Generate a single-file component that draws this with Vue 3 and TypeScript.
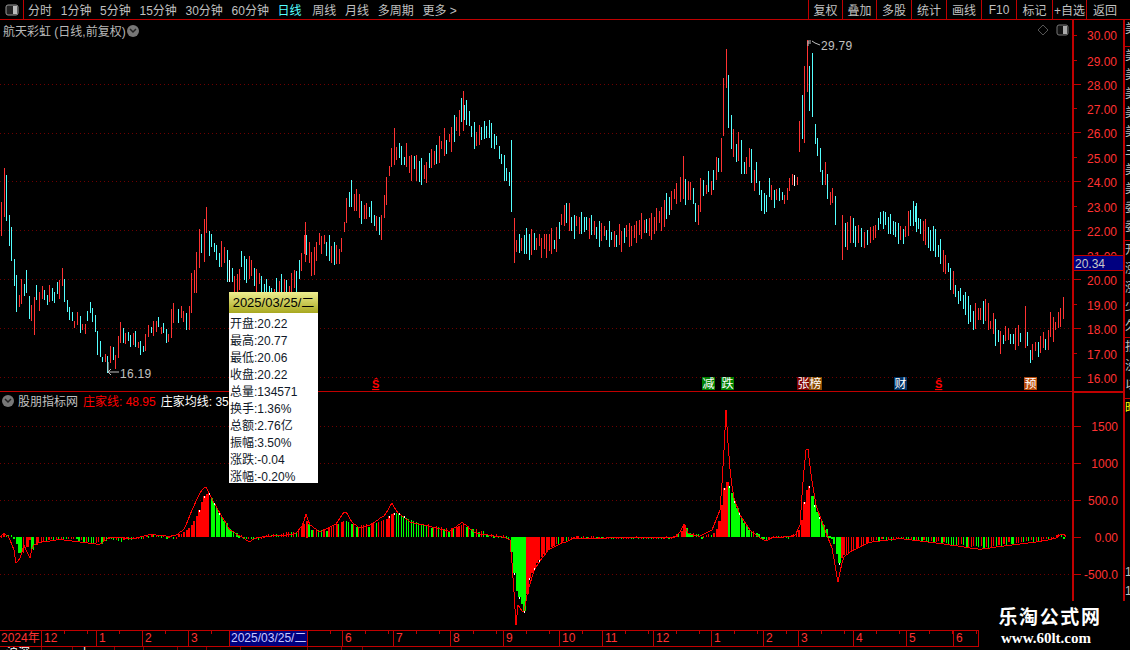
<template>
  <div class="terminal">
    <header class="toolbar">
      <button class="layout-btn" aria-label="layout">
        <svg width="14" height="12" viewBox="0 0 14 12">
          <rect x="1" y="1" width="12" height="10" rx="2" fill="#222" stroke="#999" />
          <rect x="8" y="2" width="4" height="8" fill="#bbb" />
        </svg>
      </button>
      <nav class="periods">
        <span v-for="p in periods" :key="p" class="period" :class="{ active: p === '日线' }">{{ p }}</span>
        <span class="period">更多 &gt;</span>
      </nav>
      <div class="actions">
        <span v-for="a in actions" :key="a" class="action">{{ a }}</span>
      </div>
    </header>

    <div class="workspace">
      <div class="charts">
        <svg class="plot" width="1072" height="610" viewBox="0 20 1072 610">
          <g shape-rendering="crispEdges">
            <line v-for="y in gridLines" :key="y" class="grid" x1="0" x2="1072" :y1="y + 0.5" :y2="y + 0.5" />
            <line x1="0" x2="1072" y1="391.5" y2="391.5" class="divider" />
            <rect
              v-for="(b, i) in candles"
              :key="i"
              :x="b.x"
              :y="b.top"
              width="1"
              :height="b.bottom - b.top"
              :fill="candleColors[b.c]"
            />
            <rect
              v-for="(b, i) in histogram"
              :key="'h' + i"
              :x="b.x"
              :y="b.y"
              :width="b.w"
              :height="b.h"
              :fill="b.color"
            />
            <polyline class="main-line" :points="redPoints" />
            <rect
              v-for="(d, i) in whiteDots"
              :key="'d' + i"
              :x="d.x"
              :y="d.y"
              width="1"
              height="2"
              fill="#ffffff"
            />
          </g>

          <!-- extreme price flags -->
          <path d="M808 46V41H811M808 43H811M812 41L815 43L820 45" class="flag" />
          <text x="821" y="50" class="extreme">29.79</text>
          <path d="M119 372H108M108 372L111 369M108 372L111 375M108 372V362" class="flag" />
          <text x="120" y="378" class="extreme">16.19</text>

          <!-- event marks -->
          <g v-for="m in marks" :key="m.x">
            <rect :x="m.x" y="377" width="13" height="13" :fill="m.bg" shape-rendering="crispEdges" />
            <text :x="m.x + 0.5" y="388" class="mark-text">{{ m.t }}</text>
          </g>
          <text v-for="x in sMarks" :key="x" :x="x" y="388" class="s-mark">Ŝ</text>
        </svg>

        <div class="pane-title main-title">
          航天彩虹 (日线,前复权)
          <span class="round-btn">
            <svg width="8" height="6" viewBox="0 0 8 6"><path d="M1 1L4 4L7 1" fill="none" stroke="#222" stroke-width="1.5" /></svg>
          </span>
        </div>
        <div class="pane-tools">
          <svg width="12" height="12" viewBox="0 0 12 12"><path d="M6 1L11 6L6 11L1 6Z" fill="none" stroke="#555" /></svg>
          <svg width="13" height="12" viewBox="0 0 13 12">
            <rect x="1" y="1" width="11" height="10" rx="2" fill="#111" stroke="#777" />
            <rect x="7" y="2" width="4" height="8" fill="#aaa" />
          </svg>
        </div>

        <div class="pane-title sub-title">
          <span class="round-btn">
            <svg width="8" height="6" viewBox="0 0 8 6"><path d="M1 1L4 4L7 1" fill="none" stroke="#222" stroke-width="1.5" /></svg>
          </span>
          <span>股朋指标网</span>
          <span class="val-red">庄家线: 48.95</span>
          <span class="val-white">庄家均线: 35.49</span>
        </div>

        <aside class="quote-tip">
          <div class="tip-head">2025/03/25/二</div>
          <div class="tip-body">
            <div v-for="row in tipRows" :key="row" class="tip-row">{{ row }}</div>
          </div>
        </aside>
      </div>

      <svg class="price-axis" width="51" height="581" viewBox="1072 20 51 581">
        <g shape-rendering="crispEdges">
          <line
            v-for="t in axisTicks"
            :key="t.y"
            class="tick"
            x1="1072"
            :x2="t.long ? 1081 : 1077"
            :y1="t.y + 0.5"
            :y2="t.y + 0.5"
          />
          <rect x="1072" y="391" width="51" height="2" fill="#c00000" />
          <rect x="1072" y="20" width="2" height="581" fill="#c00000" />
        </g>
        <text v-for="l in priceLabels" :key="l.t" x="1117" :y="l.y + 5" class="axis-text">{{ l.t }}</text>
        <text v-for="l in indicatorLabels" :key="l.t" x="1118" :y="l.y + 5" class="axis-text">{{ l.t }}</text>
        <rect x="1074" y="255" width="49" height="16" fill="#000080" />
        <line x1="1074" x2="1123" y1="255.5" y2="255.5" class="tick" />
        <line x1="1074" x2="1123" y1="270.5" y2="270.5" class="tick" />
        <text x="1075" y="268" class="tag-text">20.34</text>
      </svg>

      <div class="side-strip">
        <div v-for="(s, i) in sideSections" :key="i" class="side-section" :style="{ height: s.h + 'px' }">
          <span v-for="(ch, j) in s.rows" :key="j" class="side-char" :class="{ gold: ch === '昨' }">{{ ch }}</span>
        </div>
      </div>
    </div>

    <div class="time-axis">
      <div
        v-for="c in timeCells"
        :key="c.x"
        class="time-cell"
        :class="{ current: c.current }"
        :style="{ width: c.w + 'px' }"
      >
        {{ c.t }}
      </div>
    </div>

    <div class="status-strip">
      <span v-for="(s, i) in statusCells" :key="i" class="status-cell" :style="{ width: s.w + 'px' }">{{ s.t }}</span>
    </div>

    <div class="watermark">
      <div class="wm-name">乐淘公式网</div>
      <div class="wm-url">www.60lt.com</div>
    </div>
  </div>
</template>

<script setup lang="ts">
type BarColor = 'r' | 'c' | 'w'

interface Candle {
  x: number
  top: number
  bottom: number
  c: BarColor
}

const periods = ['分时', '1分钟', '5分钟', '15分钟', '30分钟', '60分钟', '日线', '周线', '月线', '多周期']
const actions = ['复权', '叠加', '多股', '统计', '画线', 'F10', '标记', '+自选', '返回']
const gridLines = [84, 133, 181, 230, 279, 328, 377, 426, 463, 500, 574]
const candleColors: Record<BarColor, string> = { r: '#ff3232', c: '#54ffff', w: '#ffffff' }

// measured off the chart at 3x: "x top bottom colour", relative to the crop origin
const leftRaw =
  '4 155 258 r|13 55 200 r|19 75 212 c|28 195 288 c|34 232 332 c|43 328 407 c|49 375 485 c|58 435 470 r|64 388 462 r|73 402 437 c|79 360 430 c|88 438 507 c|94 466 513 r|103 440 555 r|109 405 450 c|118 427 483 r|127 407 447 r|133 420 450 c|142 435 465 c|148 405 455 r|157 413 453 c|163 427 460 c|172 396 432 c|178 390 447 r|187 355 407 r|193 387 455 c|202 450 485 c|208 470 510 c|217 487 513 c|223 513 533 r|232 487 525 r|241 497 548 c|247 522 540 r|256 522 552 r|262 483 513 c|271 456 490 c|277 473 515 c|286 495 545 c|292 543 615 c|301 573 620 c|307 620 635 c|316 612 637 r|322 618 668 c|331 588 638 r|340 592 630 c|346 615 657 r|355 558 623 r|361 516 580 r|370 533 580 c|376 548 582 r|385 545 573 c|391 555 590 c|400 548 585 r|406 543 592 c|415 575 595 r|421 573 615 c|430 587 605 c|436 552 603 r|445 525 560 r|454 530 550 c|460 513 557 r|469 513 545 r|475 501 530 c|484 531 552 r|490 520 550 c|499 536 578 c|505 552 575 r|514 477 563 r|520 460 520 r|535 477 520 c|544 467 505 r|550 483 517 r|559 488 540 c|568 468 540 r|574 370 490 r|583 360 428 r|589 305 430 r|598 237 353 r|604 252 310 c|613 207 335 r|619 170 250 r|628 242 318 c|634 252 290 c|643 280 305 c|649 285 330 c|658 310 352 c|664 273 350 r|673 292 340 r|682 300 395 c|688 330 395 w|697 353 395 c|703 378 440 r|712 372 430 r|718 358 420 r'

const peakRaw =
  '1 440 515 r|10 378 507 r|16 447 525 c|25 453 510 r|31 455 510 r|40 473 522 c|46 519 576 c|55 525 584 r|61 444 546 r|70 450 497 c|79 465 492 r|85 423 485 c|94 453 495 r|100 420 480 c|109 381 450 r|115 384 426 c|124 323 426 r|130 143 318 r|139 57 173 r|145 135 293 c|154 255 357 c|160 297 381 r|169 342 396 c|175 306 393 r|184 330 432 c|193 396 432 c|199 381 432 r|208 353 410 r|214 357 458 c|223 420 483 r|229 396 459 c|238 453 495 c|244 480 543 c|253 489 552 c|259 495 546 c|268 444 501 c|274 465 510 r|283 480 534 c|289 477 510 r|298 474 513 c|307 486 510 c|313 495 522 r|322 474 510 r|328 444 483 r|337 432 465 r|343 435 468 w|352 441 465 r|358 273 366 r|367 195 327 c|373 108 339 r|382 30 186 r|388 108 243 c|397 69 261 c|406 282 342 c|412 324 378 c|421 354 426 c|427 420 465 c|436 396 465 r|442 432 507 c|451 486 525 r|457 474 519 r|466 498 585 c|487 555 690 r|496 578 650 c|502 576 660 r|511 558 640 r|520 564 640 c|526 588 650 c|535 585 640 r|544 595 650 c|553 605 655 r|562 600 645 c|571 590 640 r|580 588 630 r|586 585 625 r|595 564 600 c'

const tailRaw =
  '1 400 425 c|16 318 443 r|22 397 437 c|31 450 488 c|37 432 480 r|46 425 453 r|55 427 470 c|61 408 460 r|70 397 445 r|76 418 450 c|85 390 450 r|91 337 410 r|100 350 425 r|106 365 390 r|115 337 385 r|121 325 380 r|130 290 357 r'

function parseBars(raw: string, ox: number, oy: number): Candle[] {
  return raw.split('|').map((item) => {
    const [x, top, bottom, c] = item.split(' ')
    return {
      x: Math.floor(ox + Number(x) / 3),
      top: Math.round(oy + Number(top) / 3),
      bottom: Math.round(oy + Number(bottom) / 3),
      c: c as BarColor
    }
  })
}

function interp(keys: number[][], x: number): number {
  for (let i = 1; i < keys.length; i++) {
    if (x <= keys[i][0]) {
      const [x0, y0] = keys[i - 1]
      const [x1, y1] = keys[i]
      return y0 + ((y1 - y0) * (x - x0)) / (x1 - x0)
    }
  }
  return keys[keys.length - 1][1]
}

// small repeatable random so the filler bars stay the same on each run
let seed = 41
const rnd = () => {
  seed = (seed * 16807) % 2147483647
  return seed / 2147483647
}

// candle centres for the stretches not measured bar by bar
const centreKeys = [
  [240, 262], [250, 270], [262, 285], [275, 290], [290, 290], [300, 272], [305, 243], [312, 265],
  [320, 240], [330, 250], [340, 255], [345, 215], [352, 195], [362, 215], [372, 215], [382, 225],
  [388, 175], [394, 148], [402, 155], [412, 165], [425, 170], [440, 150], [452, 137], [463, 108],
  [475, 137], [485, 130], [495, 138], [505, 168], [511, 180], [513, 245], [520, 245], [535, 245],
  [555, 240], [565, 215], [575, 225], [590, 228], [605, 235], [620, 238], [640, 230], [655, 225],
  [670, 205], [680, 185], [880, 222], [885, 222], [900, 238], [915, 212], [925, 235], [940, 250],
  [955, 290], [965, 305], [975, 320], [985, 310], [1000, 340], [1010, 335], [1020, 340]
]

function fillerBars(from: number, to: number): Candle[] {
  const out: Candle[] = []
  for (let x = from; x < to; x += 2.5) {
    const cy = interp(centreKeys, x) + (rnd() - 0.5) * 9
    const half = 4 + rnd() * 10
    const rising = interp(centreKeys, x + 4) < interp(centreKeys, x)
    const c: BarColor = rnd() < (rising ? 0.72 : 0.3) ? 'r' : 'c'
    out.push({ x: Math.floor(x), top: Math.round(cy - half), bottom: Math.round(cy + half), c })
  }
  return out
}

const extraBars: Candle[] = [
  { x: 511, top: 140, bottom: 212, c: 'c' },
  { x: 514, top: 218, bottom: 263, c: 'r' },
  { x: 305, top: 222, bottom: 262, c: 'r' },
  { x: 394, top: 128, bottom: 165, c: 'r' },
  { x: 463, top: 91, bottom: 131, c: 'r' },
  { x: 916, top: 203, bottom: 232, c: 'c' }
]

const candles: Candle[] = [
  ...parseBars(leftRaw, 0, 150),
  ...fillerBars(241.5, 679),
  ...parseBars(peakRaw, 680, 30),
  ...fillerBars(880.5, 1019),
  ...parseBars(tailRaw, 1020, 200),
  ...extraBars
]

// lower pane: tip of each histogram bar in page y, zero line at 537
const tipKeys = [
  [0, 537], [5, 534], [10, 535], [15, 538], [18, 552], [21, 554], [25, 552], [29, 540], [32, 553],
  [36, 546], [45, 541], [60, 539], [70, 538], [80, 541], [100, 543], [110, 538], [120, 541], [135, 538],
  [150, 535], [170, 537], [185, 533], [192, 525], [197, 515], [203, 497], [208, 492], [215, 505],
  [220, 515], [230, 530], [240, 535], [250, 538], [255, 541], [265, 536], [300, 530], [306, 520],
  [312, 530], [325, 530], [345, 520], [355, 526], [370, 525], [385, 520], [392, 513], [398, 513],
  [410, 520], [430, 526], [450, 530], [462, 524], [480, 532], [500, 536], [510, 537], [512, 560],
  [516, 590], [520, 600], [524, 612], [528, 580], [535, 565], [547, 550], [560, 543], [570, 540],
  [575, 537], [600, 538], [640, 537], [670, 537], [680, 533], [684, 526], [690, 533], [700, 536],
  [715, 533], [720, 517], [723, 490], [727, 480], [735, 505], [745, 525], [755, 533], [765, 540],
  [775, 537], [790, 537], [800, 530], [804, 500], [808, 483], [815, 510], [825, 528], [835, 545],
  [838, 565], [843, 555], [855, 550], [870, 542], [900, 538], [940, 543], [960, 545], [980, 548],
  [1000, 546], [1010, 543], [1040, 541], [1050, 539], [1060, 534], [1064, 537]
]

const lineKeys = [
  [0, 537], [4, 533], [9, 537], [14, 550], [16, 563], [20, 558], [24, 545], [27, 552], [30, 558],
  [33, 545], [40, 542], [60, 539], [100, 544], [110, 537], [135, 538], [150, 534], [170, 536],
  [178, 534], [185, 528], [192, 510], [198, 497], [203, 488], [206, 487], [210, 495], [218, 510],
  [230, 530], [240, 536], [250, 542], [255, 538], [265, 536], [295, 534], [303, 525], [306, 514],
  [310, 525], [320, 532], [335, 525], [345, 510], [352, 522], [360, 528], [372, 524], [385, 515],
  [392, 503], [397, 512], [410, 522], [430, 526], [450, 531], [462, 522], [475, 533], [505, 537],
  [510, 540], [513, 575], [516, 625], [518, 605], [521, 610], [524, 612], [528, 590], [535, 568],
  [548, 550], [565, 542], [575, 538], [640, 537], [675, 537], [680, 532], [684, 524], [688, 533],
  [700, 536], [712, 530], [720, 510], [723, 470], [726, 410], [729, 460], [733, 495], [740, 515],
  [750, 530], [760, 538], [765, 541], [775, 537], [795, 536], [800, 525], [803, 480], [807, 440],
  [811, 475], [816, 505], [825, 530], [832, 548], [838, 582], [843, 558], [850, 552], [870, 542],
  [900, 538], [940, 543], [980, 549], [1000, 546], [1040, 541], [1056, 538], [1063, 533], [1066, 537]
]

const histogram: { x: number; y: number; w: number; h: number; color: string }[] = []
const whiteDots: { x: number; y: number }[] = []
let lastTip = 537
for (let x = 1.3; x < 1066; x += 2.5) {
  const base = interp(tipKeys, x)
  const tip = base + (Math.abs(base - 537) < 14 ? (rnd() - 0.5) * 3 : 0)
  const rising = tip < lastTip
  const step = Math.abs(tip - lastTip)
  const px = Math.floor(x)
  histogram.push({
    x: px,
    y: Math.round(Math.min(tip, 537)),
    w: step > 5 ? 3 : step > 1.6 ? 2 : 1,
    h: Math.max(Math.round(Math.abs(tip - 537)), 2),
    color: rising ? '#ff0000' : '#00ff00'
  })
  // the white average line only peeks out beside the bar tips on the steep parts
  if (Math.abs(tip - 537) > 18 && histogram.length % 2 === 0) {
    whiteDots.push({ x: px + 1, y: Math.round(tip) })
  }
  lastTip = tip
}

const redPoints = Array.from({ length: 534 }, (_, i) => `${i * 2},${Math.round(interp(lineKeys, i * 2))}`).join(' ')

const marks = [
  { x: 702, t: '减', bg: '#008000' },
  { x: 721, t: '跌', bg: '#008000' },
  { x: 797, t: '张', bg: '#800000' },
  { x: 809, t: '榜', bg: '#8a4a00' },
  { x: 894, t: '财', bg: '#003366' },
  { x: 1024, t: '预', bg: '#b84a0a' }
]
const sMarks = [372, 935]

const priceLabels = [
  { t: '30.00', y: 35 }, { t: '29.00', y: 61 }, { t: '28.00', y: 85 }, { t: '27.00', y: 109 },
  { t: '26.00', y: 133 }, { t: '25.00', y: 158 }, { t: '24.00', y: 182 }, { t: '23.00', y: 207 },
  { t: '22.00', y: 231 }, { t: '21.00', y: 256 }, { t: '20.00', y: 280 }, { t: '19.00', y: 305 },
  { t: '18.00', y: 329 }, { t: '17.00', y: 354 }, { t: '16.00', y: 378 }
]
const indicatorLabels = [
  { t: '1500', y: 426 }, { t: '1000', y: 463 }, { t: '500.0', y: 500 }, { t: '0.00', y: 537 }, { t: '-500.0', y: 574 }
]
const axisTicks = [
  ...priceLabels.map((l, i) => ({ y: l.y === 35 ? 35 : l.y - 1, long: i % 2 === 0 ? l.y > 35 : false })),
  ...indicatorLabels.map((l) => ({ y: l.y, long: true }))
]

const tipRows = [
  '开盘:20.22', '最高:20.77', '最低:20.06', '收盘:20.22', '总量:134571',
  '换手:1.36%', '总额:2.76亿', '振幅:3.50%', '涨跌:-0.04', '涨幅:-0.20%'
]

const sideSections = [
  { h: 26, rows: ['美'] },
  { h: 194, rows: ['美', '美', '美', '美', '美', '三', '美', '美', '委', '委'] },
  { h: 97, rows: ['开', '涨', '涨', '少', '久'] },
  { h: 61, rows: ['批', '没', '以'] },
  { h: 203, rows: ['昨', '', '', '', '', '', '', '', '', '1', '1'] }
]

const timeMarks = [
  { x: 0, t: '2024年' }, { x: 41, t: '12' }, { x: 96, t: '1' }, { x: 142, t: '2' }, { x: 188, t: '3' },
  { x: 229, t: '2025/03/25/二', current: true }, { x: 307, t: '' }, { x: 342, t: '6' }, { x: 393, t: '7' },
  { x: 450, t: '8' }, { x: 503, t: '9' }, { x: 559, t: '10' }, { x: 602, t: '11' }, { x: 653, t: '12' },
  { x: 711, t: '1' }, { x: 763, t: '2' }, { x: 798, t: '3' }, { x: 853, t: '4' }, { x: 906, t: '5' },
  { x: 953, t: '6' }, { x: 978, t: '' }
]
const timeCells = timeMarks.slice(0, -1).map((m, i) => ({ ...m, w: timeMarks[i + 1].x - m.x }))

const statusCells = [
  { w: 42, t: '沪深' }, { w: 31, t: '' }, { w: 42, t: '上' }, { w: 29, t: '' }, { w: 34, t: '' },
  { w: 29, t: '' }, { w: 34, t: '' }, { w: 67, t: '' }, { w: 34, t: '' }, { w: 21, t: '' }
]
</script>

<style scoped>
.terminal {
  position: relative;
  width: 1130px;
  height: 650px;
  overflow: hidden;
  display: flex;
  flex-direction: column;
  background: #000;
  color: #c0c0c0;
  font-family: "Liberation Sans", "Noto Sans CJK SC", sans-serif;
  font-size: 12px;
}

.toolbar {
  flex: 0 0 20px;
  display: flex;
  align-items: stretch;
  box-sizing: border-box;
  border-bottom: 1px solid #c00000;
}

.layout-btn {
  width: 24px;
  padding: 0;
  display: flex;
  align-items: center;
  justify-content: center;
  background: none;
  border: 0;
  border-right: 1px solid #c00000;
}

.periods {
  display: flex;
  align-items: center;
  gap: 8.7px;
  padding-left: 4px;
}

.period {
  white-space: nowrap;
}

.period.active {
  color: #54ffff;
}

.period.active + .period {
  margin-left: 2px;
}

.actions {
  margin-left: auto;
  margin-right: 7px;
  display: grid;
  grid-template-columns: 34px 34px 35px 35px 35px 35px 36px 34px 37px;
}

.action {
  display: flex;
  align-items: center;
  justify-content: center;
  border-left: 1px solid #c00000;
  white-space: nowrap;
}

.workspace {
  position: relative;
  flex: 0 0 610px;
  display: flex;
  align-items: flex-start;
}

.charts {
  position: relative;
  width: 1072px;
  height: 610px;
}

.plot {
  display: block;
}

.grid {
  stroke: #6e0000;
  stroke-dasharray: 1 3;
}

.divider {
  stroke: #c00000;
}

.main-line {
  fill: none;
  stroke: #ff0000;
}

.flag {
  fill: none;
  stroke: #c0c0c0;
}

.extreme {
  fill: #c0c0c0;
  font-size: 12px;
  letter-spacing: 0.3px;
}

.mark-text {
  fill: #ffffff;
  font-size: 12px;
}

.s-mark {
  fill: #ff0000;
  font-size: 11px;
  font-weight: 700;
  text-decoration: underline;
}

.pane-title {
  position: absolute;
  display: flex;
  align-items: center;
  white-space: nowrap;
}

.main-title {
  left: 3px;
  top: 2px;
  gap: 1px;
  color: #b8b8b8;
}

.sub-title {
  left: 2px;
  top: 372px;
}

.sub-title > span + span {
  margin-left: 5px;
}

.sub-title > span:nth-child(2) {
  margin-left: 4px;
}

.round-btn {
  width: 12px;
  height: 12px;
  border-radius: 50%;
  background: #777;
  display: inline-flex;
  align-items: center;
  justify-content: center;
}

.val-red {
  color: #ff0000;
}

.val-white {
  color: #ffffff;
}

.pane-tools {
  position: absolute;
  top: 4px;
  right: 3px;
  display: flex;
  gap: 7px;
}

.quote-tip {
  position: absolute;
  left: 229px;
  top: 272px;
  width: 89px;
  height: 191px;
  overflow: hidden;
  background: #fff;
  color: #000;
}

.tip-head {
  height: 21px;
  line-height: 21px;
  text-align: center;
  white-space: nowrap;
  background: linear-gradient(#eeee90, #a8a820);
  font-size: 13px;
}

.tip-body {
  padding-top: 3px;
}

.tip-row {
  height: 17px;
  line-height: 17px;
  padding-left: 1px;
  white-space: nowrap;
  color: #101828;
}

.price-axis {
  flex: 0 0 51px;
  display: block;
  background: #000;
}

.tick {
  stroke: #c00000;
}

.axis-text {
  fill: #ff3232;
  font-size: 12px;
  text-anchor: end;
}

.tag-text {
  fill: #c8c8c8;
  font-size: 12px;
}

.side-strip {
  flex: 0 0 7px;
  height: 581px;
  overflow: hidden;
  box-sizing: border-box;
  border-left: 2px solid #c00000;
}

.side-section {
  box-sizing: border-box;
  border-top: 1px solid #c00000;
  overflow: hidden;
  display: flex;
  flex-direction: column;
}

.side-section:first-child {
  border-top: 0;
}

.side-char {
  height: 19px;
  line-height: 19px;
  width: 12px;
  white-space: nowrap;
  color: #c0c0c0;
}

.side-char.gold {
  color: #ffff00;
}

.time-axis {
  flex: 0 0 17px;
  width: 979px;
  box-sizing: border-box;
  display: flex;
  border-top: 1px solid #c00000;
  border-bottom: 1px solid #c00000;
  border-right: 1px solid #c00000;
}

.time-cell {
  box-sizing: border-box;
  padding-left: 2px;
  border-left: 1px solid #c00000;
  color: #ff3232;
  line-height: 15px;
  white-space: nowrap;
  overflow: hidden;
  background: repeating-linear-gradient(90deg, transparent 0 22px, #c00000 22px 23px) top left / 100% 3px no-repeat;
}

.time-cell:first-child {
  border-left: 0;
  background: none;
  padding-left: 1px;
}

.time-cell.current {
  background: #000080;
  color: #c8c8ff;
  padding-left: 1px;
}

.status-strip {
  flex: 1;
  display: flex;
  overflow: hidden;
}

.status-cell {
  box-sizing: border-box;
  padding-left: 6px;
  border-right: 1px solid #8a0000;
  color: #fff;
  line-height: 12px;
  white-space: nowrap;
}

.watermark {
  position: absolute;
  left: 998px;
  top: 606px;
  width: 104px;
  color: #fff;
  font-weight: 700;
  text-align: center;
  white-space: nowrap;
}

.wm-name {
  font-size: 19px;
  line-height: 24px;
  letter-spacing: 1.6px;
}

.wm-url {
  font-family: "Liberation Serif", serif;
  font-size: 15px;
  line-height: 16px;
  margin-left: -8px;
}
</style>
